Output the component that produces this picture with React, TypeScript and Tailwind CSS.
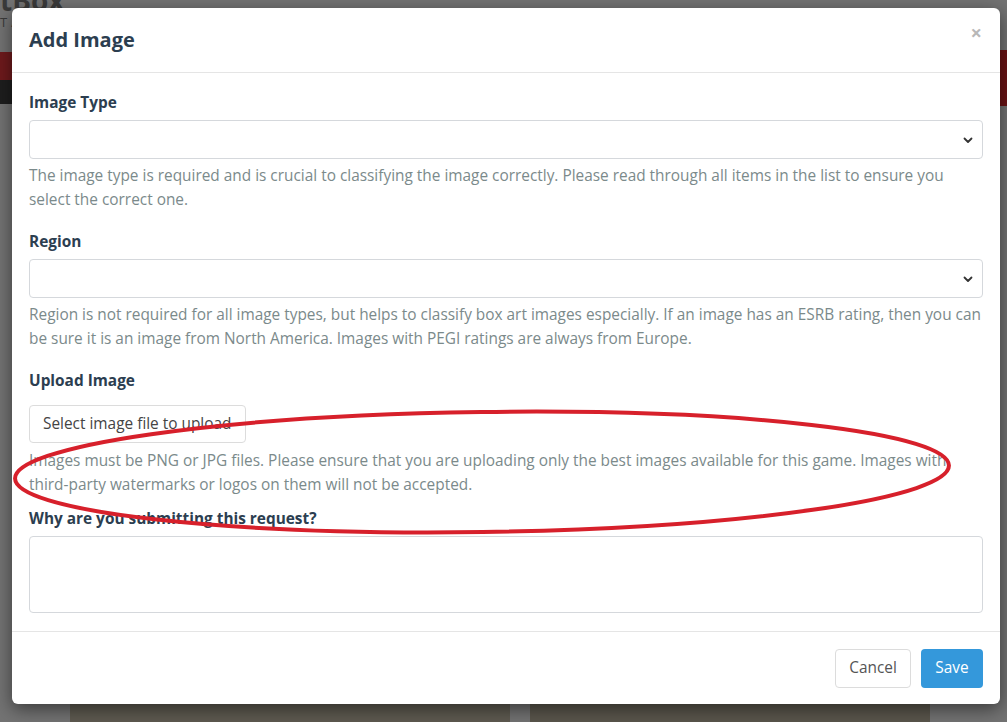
import React from "react";

function Chevron() {
  return (
    <svg width="12" height="12" viewBox="0 0 12 12" className="absolute right-[8px] top-1/2 -translate-y-1/2">
      <path d="M2.5 4.5 L6 8 L9.5 4.5" fill="none" stroke="#333" strokeWidth="1.8" strokeLinecap="round" strokeLinejoin="round" />
    </svg>
  );
}

function SelectBox() {
  return (
    <div className="relative h-[39px] w-full rounded-[4px] border border-[#d5d8dc] bg-white">
      <Chevron />
    </div>
  );
}

function Field({ label, gap, children, help, helpGap }: { label: string; gap: string; children: React.ReactNode; help?: string; helpGap?: string }) {
  return (
    <div className="flex flex-col">
      <div className={`font-bold text-[#2c3e50] ${gap}`}>{label}</div>
      {children}
      {help && <p className={`text-[#7b8a8b] ${helpGap ?? ""}`}>{help}</p>}
    </div>
  );
}

export default function App() {
  const font = { fontFamily: '"Open Sans", "Noto Sans", sans-serif' };
  return (
    <div className="relative h-[722px] w-[1007px] overflow-hidden bg-[#737373] pl-[12px] pt-[8px]" style={font}>
      {/* background page hints */}
      <div className="absolute left-0 top-[-15px] flex flex-col text-[#3a3a3a]">
        <span className="text-[28px] font-bold leading-[30px]">tBox</span>
        <span className="text-[13px] leading-[14px] tracking-[4px]">TA</span>
      </div>
      <div className="absolute left-0 top-[52px] h-[28px] w-[14px] bg-[#6e1a1c]" />
      <div className="absolute left-0 top-[80px] h-[24px] w-[14px] bg-[#1e1e1e]" />
      <div className="absolute right-0 top-[50px] h-[56px] w-[10px] bg-[#6a1214]" />
      <div className="absolute bottom-0 left-[70px] h-[18px] w-[440px] bg-[#5e5a50]" />
      <div className="absolute bottom-0 left-[530px] h-[18px] w-[400px] bg-[#5a564c]" />

      {/* modal */}
      <div className="relative flex w-[988px] flex-col rounded-[6px] bg-white shadow-[0_5px_18px_rgba(0,0,0,0.5)]">
        <div className="flex h-[65px] items-center justify-between border-b border-[#e5e5e5] px-[17px]">
          <h4 className="text-[20px] font-bold text-[#2c3e50]">Add Image</h4>
          <span className="mr-[1px] mt-[-14px] text-[20px] font-bold leading-none text-[#b8b8b8]">×</span>
        </div>

        <div className="flex flex-col gap-[18px] px-[17px] pb-[18px] pt-[18px] text-[15.4px] leading-[24px]">
          <Field
            label="Image Type"
            gap="mb-[5px]"
            helpGap="mt-[5px]"
            help="The image type is required and is crucial to classifying the image correctly. Please read through all items in the list to ensure you select the correct one."
          >
            <SelectBox />
          </Field>

          <Field
            label="Region"
            gap="mb-[5px]"
            helpGap="mt-[5px]"
            help="Region is not required for all image types, but helps to classify box art images especially. If an image has an ESRB rating, then you can be sure it is an image from North America. Images with PEGI ratings are always from Europe."
          >
            <SelectBox />
          </Field>

          <Field
            label="Upload Image"
            gap="mb-[12px]"
            helpGap="mt-[6px] mb-[-8px]"
            help="Images must be PNG or JPG files. Please ensure that you are uploading only the best images available for this game. Images with third-party watermarks or logos on them will not be accepted."
          >
            <button className="h-[38px] w-[217px] rounded-[4px] border border-[#dcdcdc] bg-white px-[13px] text-left text-[15.4px] text-[#444]">
              Select image file to upload
            </button>
          </Field>

          <Field label="Why are you submitting this request?" gap="mb-[5px]">
            <div className="h-[77px] w-full rounded-[4px] border border-[#d5d8dc] bg-white" />
          </Field>
        </div>

        <div className="flex h-[73px] items-center justify-end gap-[10px] border-t border-[#e5e5e5] px-[17px]">
          <button className="h-[39px] w-[76px] rounded-[4px] border border-[#dcdcdc] bg-white text-[15.4px] text-[#555]">Cancel</button>
          <button className="h-[39px] w-[62px] rounded-[4px] bg-[#3498db] text-[15.4px] text-white">Save</button>
        </div>
      </div>

      {/* red annotation ellipse */}
      <svg className="pointer-events-none absolute left-0 top-0" width="1007" height="722">
        <ellipse cx="482" cy="472" rx="467" ry="60" transform="rotate(-0.8 482 472)" fill="none" stroke="#d7202b" strokeWidth="4" />
      </svg>
    </div>
  );
}
